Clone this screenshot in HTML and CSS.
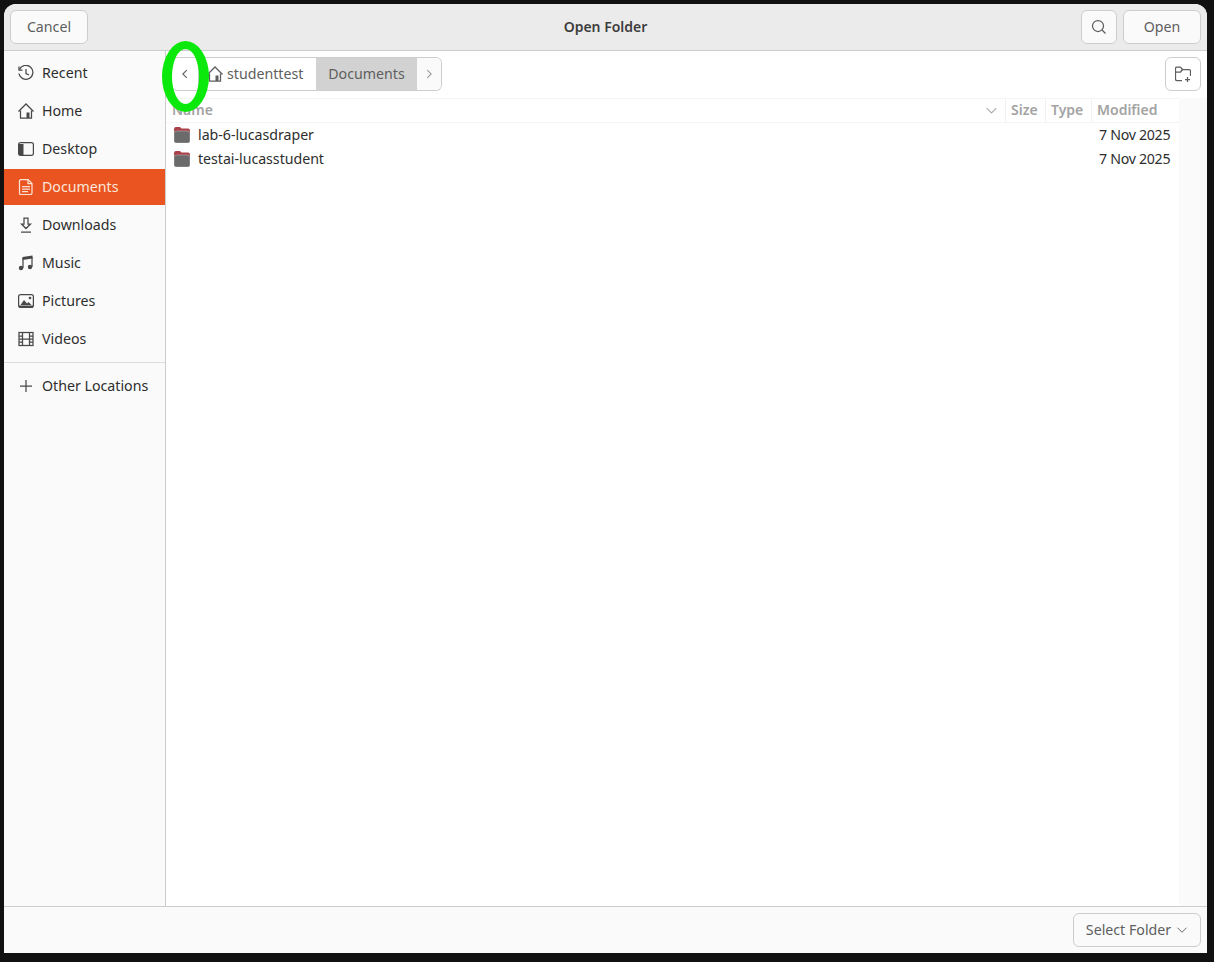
FILE: index.html
```html
<!DOCTYPE html>
<html lang="en">
<head>
<meta charset="utf-8">
<title>Open Folder</title>
<link rel="stylesheet" href="styles.css">
</head>
<body>
<div class="window">
  <header class="titlebar">
    <div class="tb-side"><button class="btn btn-wide">Cancel</button></div>
    <div class="title">Open Folder</div>
    <div class="tb-side tb-right">
      <button class="btn btn-icon"><svg class="ic" viewBox="0 0 16 16"><circle cx="7" cy="7" r="5.500"/><path d="M11 11l3.500 3.500"/></svg></button>
      <button class="btn btn-wide">Open</button>
    </div>
  </header>
  <div class="body">
    <nav class="sidebar">
      <div class="places">
        <div class="place"><svg class="ic" viewBox="0 0 16 16"><path d="M1.500 4.500A7 7 0 1 1 1 8.500"/><path d="M1 1.500v3.500h3.500"/><path d="M8 4v4.500l3 1.500"/></svg><span>Recent</span></div>
        <div class="place"><svg class="ic" viewBox="0 0 16 16"><path d="M.5 8.500L8 1l7.500 7.500"/><path d="M2.500 7.500v7.500h11V7.500"/><path class="solid" d="M8.500 9.500h3v5.500h-3z"/></svg><span>Home</span></div>
        <div class="place"><svg class="ic" viewBox="0 0 16 16"><rect x=".6" y="1.600" width="14.800" height="12.800" rx="2"/><path class="solid" d="M1 3h4.500v11H1z"/></svg><span>Desktop</span></div>
        <div class="place active"><svg class="ic" viewBox="0 0 16 16"><path d="M2.500.5h7.500l4 4v9.500a1.500 1.500 0 0 1-1.500 1.500h-10A1.500 1.500 0 0 1 1.500 14V1.500z"/><path d="M10 .5v4h4M4 7.500h8M4 10h8M4 12.500h6"/></svg><span>Documents</span></div>
        <div class="place"><svg class="ic" viewBox="0 0 16 16"><path d="M6 1h4v6h2.500L8 11.500 3.500 7H6z"/><path d="M3 15h10"/></svg><span>Downloads</span></div>
        <div class="place"><svg class="ic" viewBox="0 0 16 16"><path d="M5 13V3M14 12V2"/><path class="solid" d="M4.500 2l10-1.500v3l-10 1.500z"/><circle class="solid" cx="3" cy="13" r="2.200"/><circle class="solid" cx="12" cy="12" r="2.200"/></svg><span>Music</span></div>
        <div class="place"><svg class="ic" viewBox="0 0 16 16"><rect x=".6" y="1.600" width="14.800" height="12.800" rx="2"/><path class="solid" d="M2.500 12l3.500-5 3 3.500 1.500-1.500 3 3z"/><circle class="solid" cx="12" cy="5" r="1.300"/><path class="solid" d="M1 12.500h14V14a1 1 0 0 1-1 1H2a1 1 0 0 1-1-1z"/></svg><span>Pictures</span></div>
        <div class="place"><svg class="ic" viewBox="0 0 16 16"><rect x="1" y="1.500" width="14" height="13"/><path d="M4.500 1.500v13M11.500 1.500v13M4.500 8h7M1 5h3.500M1 8h3.500M1 11h3.500M11.500 5H15M11.500 8H15M11.500 11H15"/></svg><span>Videos</span></div>
      </div>
      <div class="sep"></div>
      <div class="place place-last"><svg class="ic" viewBox="0 0 16 16"><path d="M8 2v12M2 8h12"/></svg><span>Other Locations</span></div>
    </nav>
    <main class="content">
      <div class="toolbar">
        <button class="btn btn-back"><svg class="ic chev" viewBox="0 0 16 16"><path d="M10 3.500L5.500 8l4.500 4.500"/></svg></button>
        <div class="pathbar">
          <div class="crumb home"><svg class="ic" viewBox="0 0 16 16"><path d="M.5 8.500L8 1l7.500 7.500"/><path d="M2.500 7.500v7.500h11V7.500"/><path class="solid" d="M8.500 9.500h3v5.500h-3z"/></svg><span>studenttest</span></div>
          <div class="crumb current">Documents</div>
          <div class="crumb next"><svg class="ic chev dim" viewBox="0 0 16 16"><path d="M6 3.500L10.500 8 6 12.500"/></svg></div>
        </div>
        <button class="btn btn-icon btn-newfolder"><svg class="ic" viewBox="0 0 16 16"><path d="M7 14.500H2a1.500 1.500 0 0 1-1.500-1.500V2.500A1.500 1.500 0 0 1 2 1h3.500l2 2.500H14A1.500 1.500 0 0 1 15.500 5v5"/><path d="M.5 6h5l2-2.500"/><path d="M12.500 11v5M10 13.500h5"/></svg></button>
      </div>
      <div class="listing">
        <div class="files">
          <div class="thead">
            <div class="th th-name"><span>Name</span><svg class="ic sort" viewBox="0 0 16 16"><path d="M2 5l6 6 6-6"/></svg></div>
            <div class="th th-size">Size</div>
            <div class="th th-type">Type</div>
            <div class="th th-mod">Modified</div>
          </div>
          <div class="row">
            <svg class="folder" viewBox="0 0 16 16"><path class="f-tab" d="M0 6V2a2 2 0 0 1 2-2h4l1.500 1.500H14a2 2 0 0 1 2 2V6z"/><rect class="f-body" y="4" width="16" height="12" rx="2"/></svg>
            <span class="fname">lab-6-lucasdraper</span><span class="fdate">7 Nov 2025</span>
          </div>
          <div class="row">
            <svg class="folder" viewBox="0 0 16 16"><path class="f-tab" d="M0 6V2a2 2 0 0 1 2-2h4l1.500 1.500H14a2 2 0 0 1 2 2V6z"/><rect class="f-body" y="4" width="16" height="12" rx="2"/></svg>
            <span class="fname">testai-lucasstudent</span><span class="fdate">7 Nov 2025</span>
          </div>
        </div>
        <div class="scrollstrip"></div>
      </div>
    </main>
  </div>
  <footer class="footer">
    <button class="btn btn-select"><span>Select Folder</span><svg class="ic sel" viewBox="0 0 16 16"><path d="M2 5l6 6 6-6"/></svg></button>
  </footer>
</div>
<div class="annotation"></div>
</body>
</html>
```
FILE: styles.css
```css
* { box-sizing: border-box; }
html, body { margin: 0; height: 100%; }
body {
  background: #111;
  padding: 4px 7px 9px 4px;
  font-family: "Noto Sans", sans-serif;
  font-size: 14.2px;
  line-height: 18px;
  color: #3d3d3d;
  overflow: hidden;
}
.window {
  height: 949px;
  background: #fafafa;
  border-radius: 12px 12px 0 0;
  display: flex;
  flex-direction: column;
  overflow: hidden;
}
.titlebar {
  height: 47px;
  flex: none;
  background: #ebebeb;
  border-bottom: 1px solid #cdcdcd;
  display: grid;
  grid-template-columns: 1fr auto 1fr;
  align-items: center;
  padding: 0 6px 1px;
}
.tb-side { display: flex; gap: 6px; }
.tb-right { justify-content: flex-end; }
.title { text-align: center; font-weight: 600; font-size: 14px; color: #3d3d3d; }
.btn {
  height: 34px;
  background: #fafafa;
  border: 1px solid #cdcdcd;
  border-radius: 6px;
  font: inherit;
  color: #5e5e5e;
  display: flex;
  align-items: center;
  justify-content: center;
  padding: 0;
}
.btn-wide { width: 78px; }
.btn-icon { width: 36px; }
.ic { width: 16px; height: 16px; fill: none; stroke: currentColor; stroke-width: 1.25; flex: none; }
.solid { fill: currentColor; stroke: none; }
.body { flex: 1; display: flex; min-height: 0; }
.sidebar {
  width: 162px;
  flex: none;
  background: #fafafa;
  border-right: 1px solid #cdcdcd;
  padding-top: 4px;
}
.places { display: flex; flex-direction: column; gap: 2px; }
.place {
  height: 36px;
  display: flex;
  align-items: center;
  gap: 8px;
  padding: 0 0 1px 14px;
  color: #2e2e2e;
}
.place .ic { color: #484848; }
.place.active { background: #e95420; color: #fbe6dc; }
.place.active .ic { color: #fbe0d4; }
.place-last { padding: 1px 0 0 14px; }
.sep { height: 1px; background: #dcdcdc; margin: 5px 0 4px; }
.content { flex: 1; background: #fff; display: flex; flex-direction: column; min-width: 0; }
.toolbar {
  height: 47px;
  flex: none;
  display: flex;
  align-items: center;
  padding: 0 6px 1px 5px;
}
.btn-back { width: 28px; border-radius: 6px 0 0 6px; background: #fff; color: #5e5e5e; }
.chev { width: 14px; height: 14px; }
.dim { color: #9a9a9a; }
.pathbar {
  height: 34px;
  display: flex;
  border: 1px solid #cdcdcd;
  border-left: none;
  border-radius: 0 6px 6px 0;
  overflow: hidden;
  color: #5e5e5e;
}
.crumb { display: flex; align-items: center; justify-content: center; padding-bottom: 1px; }
.home { width: 117px; gap: 4px; justify-content: flex-start; padding-left: 8px; background: #fff; }
.current { width: 101px; background: #d2d2d2; }
.next { width: 24px; background: #fafafa; }
.btn-newfolder { margin-left: auto; background: #fff; }
.listing { flex: 1; display: flex; min-height: 0; }
.files { flex: 1; min-width: 0; background: #fff; }
.scrollstrip { width: 28px; background: #fafafa; }
.thead {
  height: 25px;
  display: flex;
  border-top: 1px solid #f4f4f4;
  border-bottom: 1px solid #f4f4f4;
  color: #a3a3a3;
  font-weight: 600;
  font-size: 14px;
}
.th { display: flex; align-items: center; border-right: 1px solid #f2f2f2; padding: 0 0 1px 5px; }
.th-name { flex: 1; justify-content: space-between; padding: 0 7px 1px 6px; }
.th-size { width: 40px; }
.th-type { width: 46px; }
.th-mod { width: 87px; border-right: none; }
.sort { width: 13px; height: 13px; color: #a8a8a8; }
.row { height: 24px; display: flex; align-items: center; padding: 0 0 1px 8px; color: #2e2e2e; }
.folder { width: 16px; height: 16px; flex: none; }
.f-tab { fill: #a8434a; }
.f-body { fill: #6b6b6b; stroke: #fafafa; stroke-width: .3; }
.fname { margin-left: 8px; flex: 1; letter-spacing: -.03px; }
.fdate { width: 80px; letter-spacing: -.3px; }
.footer {
  height: 47px;
  flex: none;
  background: #fafafa;
  border-top: 1px solid #cdcdcd;
  display: flex;
  align-items: center;
  justify-content: flex-end;
  padding: 0 6px;
}
.btn-select { width: 128px; gap: 5px; }
.sel { width: 12px; height: 12px; color: #5e5e5e; }
.annotation {
  position: absolute;
  left: 162px;
  top: 41px;
  width: 47px;
  height: 71px;
  border-style: solid;
  border-color: #0be80b;
  border-width: 8px 10px;
  border-radius: 50%;
}
```
